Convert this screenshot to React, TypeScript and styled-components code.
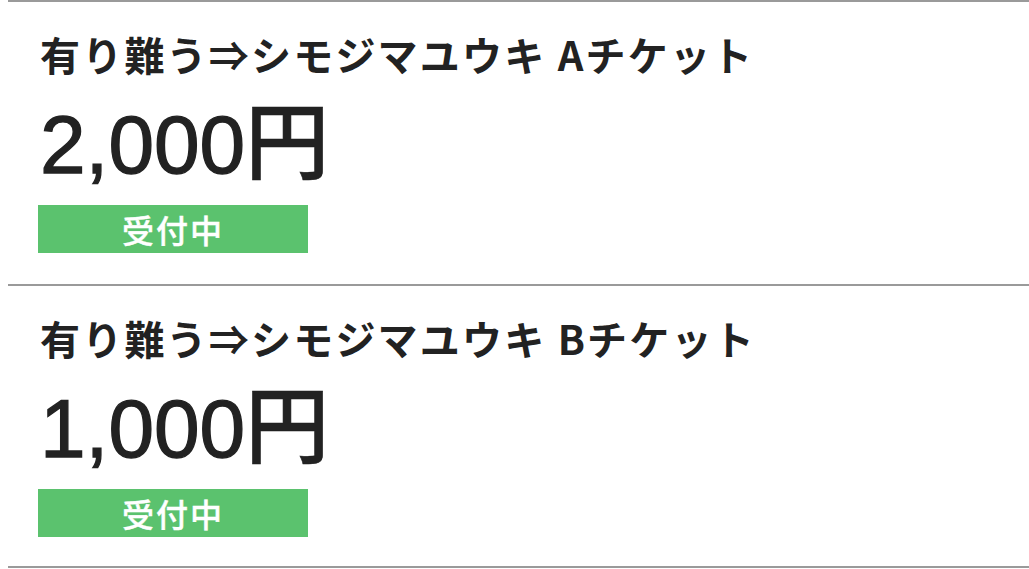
import styled, { createGlobalStyle } from "styled-components";

const GlobalStyle = createGlobalStyle`
  html, body {
    margin: 0;
    padding: 0;
    background: #fff;
  }
  body {
    font-family: "Noto Sans CJK JP", "Liberation Sans", sans-serif;
    color: #222;
  }
`;

const StyledList = styled.ul`
  list-style: none;
  margin: 0;
  padding: 0 0 0 8px;
`;

const StyledItem = styled.li`
  height: 284px;
  box-sizing: border-box;
  border-top: 2px solid #9a9a9a;
  padding: 23px 0 0 32px;
  &:last-child {
    border-bottom: 2px solid #9a9a9a;
  }
`;

const StyledTitle = styled.h2`
  margin: 0;
  font-size: 40px;
  line-height: 58px;
  font-weight: 700;
  letter-spacing: 2.2px;
  color: #222;
`;

const StyledPrice = styled.div`
  margin-top: 7px;
  font-family: "Liberation Sans", "Noto Sans CJK JP", sans-serif;
  font-size: 82px;
  line-height: 94px;
  font-weight: 400;
  color: #222;
  -webkit-text-stroke: 1.3px #222;
`;

const StyledYen = styled.span`
  font-family: "Noto Sans CJK JP", sans-serif;
  font-weight: 500;
  font-size: 84px;
  -webkit-text-stroke: 0.6px #222;
`;

const StyledBadge = styled.div`
  margin: 13px 0 0 -2px;
  width: 270px;
  height: 48px;
  background-color: ${(props) => props.color};
  color: #fff;
  font-size: 32px;
  font-weight: 500;
  line-height: 48px;
  letter-spacing: 2px;
  text-align: center;
  -webkit-text-stroke: 0.4px #fff;
`;

interface ITicket {
  name: string;
  price: string;
  status: string;
}

const tickets: ITicket[] = [
  { name: "有り難う⇒シモジマユウキ Aチケット", price: "2,000", status: "受付中" },
  { name: "有り難う⇒シモジマユウキ Bチケット", price: "1,000", status: "受付中" },
];

const App = () => {
  return (
    <>
      <GlobalStyle />
      <StyledList>
        {tickets.map((ticket) => (
          <StyledItem key={ticket.name}>
            <StyledTitle>{ticket.name}</StyledTitle>
            <StyledPrice>
              {ticket.price}
              <StyledYen>円</StyledYen>
            </StyledPrice>
            <StyledBadge color={"#5bc26e"}>{ticket.status}</StyledBadge>
          </StyledItem>
        ))}
      </StyledList>
    </>
  );
};

export default App;
